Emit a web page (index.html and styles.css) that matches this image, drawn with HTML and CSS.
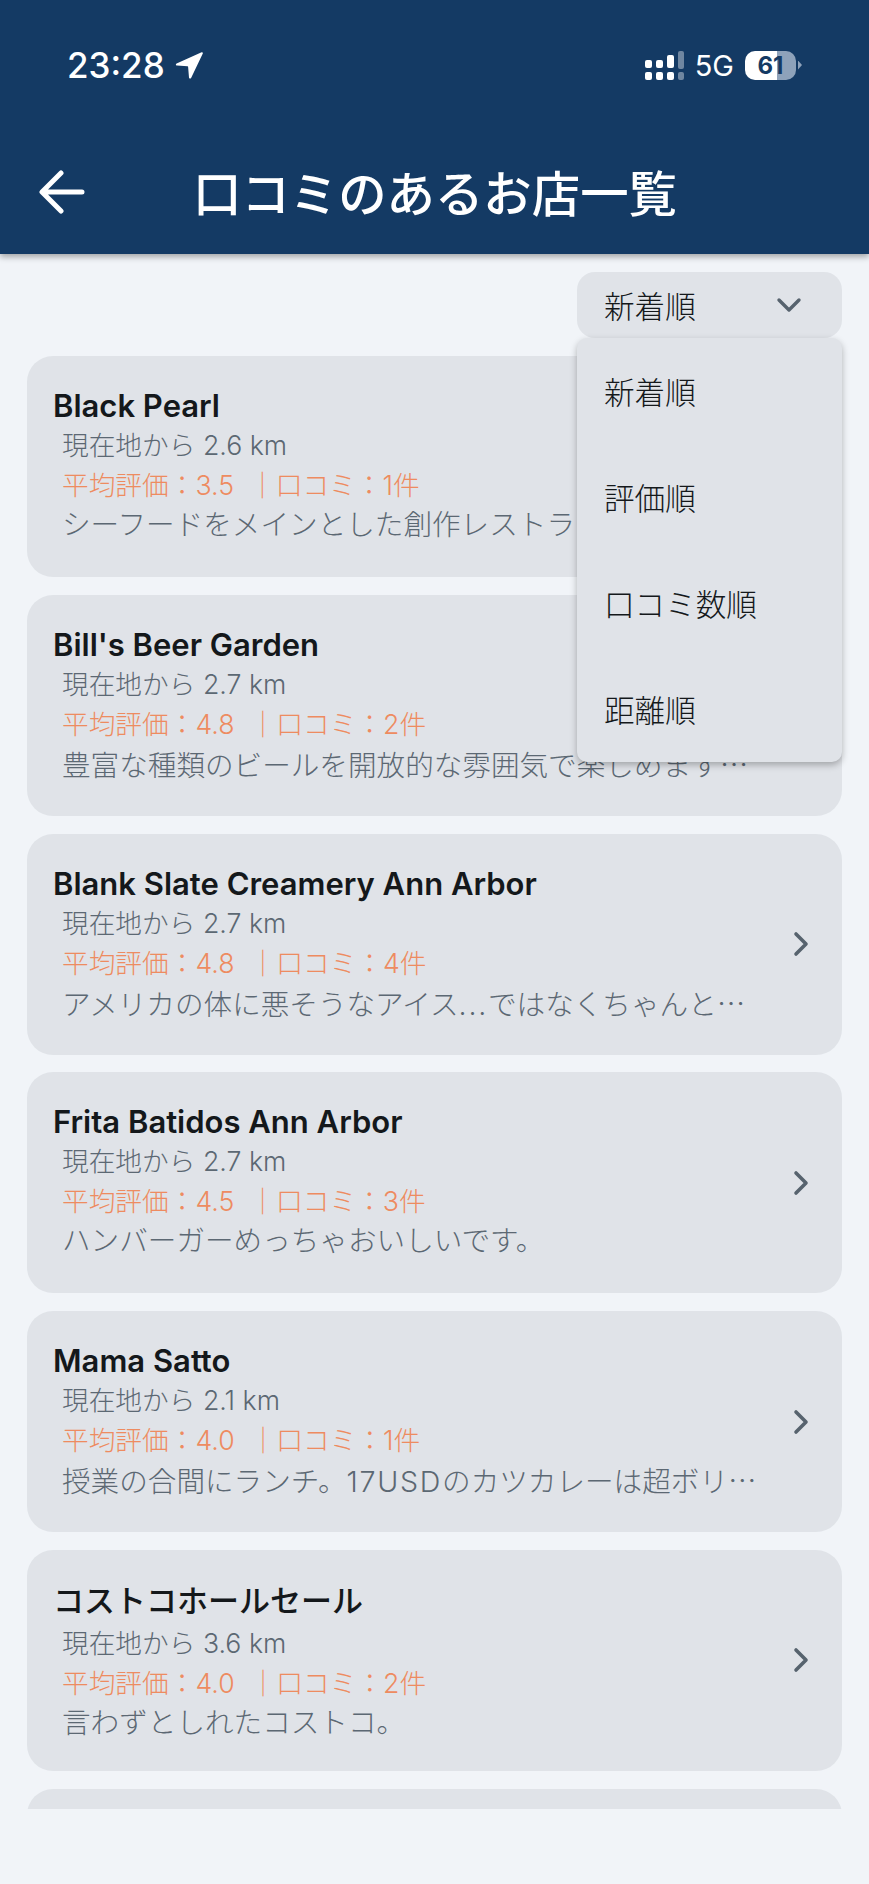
FILE: index.html
```html
<!DOCTYPE html>
<html lang="ja">
<head>
  <meta charset="UTF-8">
  <meta name="viewport" content="width=device-width, initial-scale=1.0">
  <title>口コミのあるお店一覧</title>
  <link rel="stylesheet" href="styles.css">
</head>
<body>
  <header class="app-bar">
    <div class="status-bar">
      <div class="status-left">
        <span class="clock">23:28</span>
        <svg class="location" width="28" height="28" viewBox="0 0 28 28"><path d="M26.6 1.2 1.6 12.4c-1.2.6-.9 2 .4 2.1l10.6.8c.3 0 .5.2.5.5l.9 10.7c.1 1.3 1.5 1.5 2.1.4L27.8 2.4c.3-.8-.4-1.5-1.2-1.2z" fill="#fff"/></svg>
      </div>
      <div class="status-right">
        <svg class="signal" width="40" height="29" viewBox="0 0 40 29">
          <g fill="#fff">
            <rect x="0" y="9" width="7" height="8" rx="2"/>
            <rect x="0" y="21" width="7" height="8" rx="2"/>
            <rect x="11" y="9" width="7" height="8" rx="2"/>
            <rect x="11" y="21" width="7" height="8" rx="2"/>
            <rect x="22" y="4" width="7" height="13" rx="2"/>
            <rect x="22" y="21" width="7" height="8" rx="2"/>
          </g>
          <g fill="#6f86a0">
            <rect x="33" y="0" width="6" height="18" rx="2"/>
            <rect x="33" y="21" width="6" height="8" rx="2"/>
          </g>
        </svg>
        <span class="network">5G</span>
        <span class="battery">61</span>
        <span class="battery-nub"></span>
      </div>
    </div>
    <div class="title-row">
      <svg class="back" width="46" height="44" viewBox="0 0 46 44"><path d="M43 22H4M22 3 3 22l19 19" fill="none" stroke="#fff" stroke-width="5" stroke-linecap="round" stroke-linejoin="round"/></svg>
      <h1>口コミのあるお店一覧</h1>
    </div>
  </header>

  <main class="content">
    <div class="sort">
      <div class="sort-button">
        <span>新着順</span>
        <svg width="26" height="16" viewBox="0 0 26 16"><path d="M3 3 13 13 23 3" fill="none" stroke="#57636e" stroke-width="3.4" stroke-linecap="round" stroke-linejoin="round"/></svg>
      </div>
      <ul class="sort-menu">
        <li>新着順</li>
        <li>評価順</li>
        <li>口コミ数順</li>
        <li>距離順</li>
      </ul>
    </div>

    <div class="list">
      <article class="card">
        <div class="card-body">
          <h2>Black Pearl</h2>
          <p class="distance">現在地から 2.6 km</p>
          <p class="rating">平均評価：3.5&nbsp; ｜口コミ：1件</p>
          <p class="desc">シーフードをメインとした創作レストラ</p>
        </div>
        <svg class="chevron" width="18" height="26" viewBox="0 0 18 26"><path d="M4 3 14 13 4 23" fill="none" stroke="#57636e" stroke-width="3.6" stroke-linecap="round" stroke-linejoin="round"/></svg>
      </article>
      <article class="card">
        <div class="card-body">
          <h2>Bill's Beer Garden</h2>
          <p class="distance">現在地から 2.7 km</p>
          <p class="rating">平均評価：4.8&nbsp; ｜口コミ：2件</p>
          <p class="desc">豊富な種類のビールを開放的な雰囲気で楽しめます<span class="more">…</span></p>
        </div>
        <svg class="chevron" width="18" height="26" viewBox="0 0 18 26"><path d="M4 3 14 13 4 23" fill="none" stroke="#57636e" stroke-width="3.6" stroke-linecap="round" stroke-linejoin="round"/></svg>
      </article>
      <article class="card">
        <div class="card-body">
          <h2>Blank Slate Creamery Ann Arbor</h2>
          <p class="distance">現在地から 2.7 km</p>
          <p class="rating">平均評価：4.8&nbsp; ｜口コミ：4件</p>
          <p class="desc">アメリカの体に悪そうなアイス<span class="latin">...</span>ではなくちゃんと<span class="more">…</span></p>
        </div>
        <svg class="chevron" width="18" height="26" viewBox="0 0 18 26"><path d="M4 3 14 13 4 23" fill="none" stroke="#57636e" stroke-width="3.6" stroke-linecap="round" stroke-linejoin="round"/></svg>
      </article>
      <article class="card">
        <div class="card-body">
          <h2>Frita Batidos Ann Arbor</h2>
          <p class="distance">現在地から 2.7 km</p>
          <p class="rating">平均評価：4.5&nbsp; ｜口コミ：3件</p>
          <p class="desc">ハンバーガーめっちゃおいしいです。</p>
        </div>
        <svg class="chevron" width="18" height="26" viewBox="0 0 18 26"><path d="M4 3 14 13 4 23" fill="none" stroke="#57636e" stroke-width="3.6" stroke-linecap="round" stroke-linejoin="round"/></svg>
      </article>
      <article class="card">
        <div class="card-body">
          <h2>Mama Satto</h2>
          <p class="distance">現在地から 2.1 km</p>
          <p class="rating">平均評価：4.0&nbsp; ｜口コミ：1件</p>
          <p class="desc">授業の合間にランチ。<span class="latin">17USD</span>のカツカレーは超ボリ<span class="more">…</span></p>
        </div>
        <svg class="chevron" width="18" height="26" viewBox="0 0 18 26"><path d="M4 3 14 13 4 23" fill="none" stroke="#57636e" stroke-width="3.6" stroke-linecap="round" stroke-linejoin="round"/></svg>
      </article>
      <article class="card">
        <div class="card-body">
          <h2 class="jp">コストコホールセール</h2>
          <p class="distance">現在地から 3.6 km</p>
          <p class="rating">平均評価：4.0&nbsp; ｜口コミ：2件</p>
          <p class="desc">言わずとしれたコストコ。</p>
        </div>
        <svg class="chevron" width="18" height="26" viewBox="0 0 18 26"><path d="M4 3 14 13 4 23" fill="none" stroke="#57636e" stroke-width="3.6" stroke-linecap="round" stroke-linejoin="round"/></svg>
      </article>
      <article class="card"></article>
    </div>
  </main>
</body>
</html>
```

FILE: styles.css
```css
* { box-sizing: border-box; }
html, body { margin: 0; padding: 0; }
body {
  height: 1884px;
  overflow: hidden;
  background: #f1f4f8;
  font-family: Inter, "Noto Sans CJK JP", sans-serif;
}

.app-bar {
  position: relative;
  z-index: 2;
  height: 254px;
  background: #143a64;
  box-shadow: 0 3px 6px rgba(0, 0, 0, 0.32);
  color: #fff;
}
.status-bar {
  height: 130px;
  padding: 44px 67px 0 67px;
  display: flex;
  justify-content: space-between;
  align-items: flex-start;
}
.status-left { display: flex; align-items: center; gap: 10px; }
.clock { font-size: 35px; font-weight: 500; line-height: 42px; }
.status-right { display: flex; align-items: center; padding-top: 5px; }
.signal { margin-right: 10px; }
.network { font-size: 29px; font-weight: 400; line-height: 30px; margin-right: 11px; padding-top: 2px; }
.battery {
  width: 51px;
  height: 29px;
  border-radius: 10px;
  background: linear-gradient(90deg, #fff 63%, #8ea2ba 63%);
  color: #143a64;
  font-size: 24px;
  font-weight: 700;
  line-height: 29px;
  text-align: center;
}
.battery-nub {
  width: 4px;
  height: 9px;
  margin-left: 2px;
  background: #8ea2ba;
  clip-path: polygon(0 0, 100% 50%, 0 100%);
}
.title-row {
  display: flex;
  align-items: center;
  height: 124px;
  padding: 0 0 0 39px;
}
.title-row h1 {
  margin: 0 0 0 108px;
  padding-top: 6px;
  font-size: 48.4px;
  font-weight: 500;
  line-height: 60px;
}
.back { flex: none; }

.content { padding: 18px 27px 0; }

.sort {
  position: relative;
  z-index: 1;
  display: flex;
  justify-content: flex-end;
}
.sort-button {
  width: 265px;
  height: 66px;
  padding: 0 40px 0 27px;
  display: flex;
  align-items: center;
  justify-content: space-between;
  border-radius: 18px;
  background: #e0e3e8;
  font-size: 30.6px;
  font-weight: 300;
  color: #14181b;
}
.sort-menu {
  position: absolute;
  top: 66px;
  right: 0;
  width: 265px;
  margin: 0;
  padding: 0;
  list-style: none;
  border-radius: 10px;
  background: #e0e3e8;
  box-shadow: 0 3px 7px rgba(0, 0, 0, 0.28);
}
.sort-menu li {
  height: 106px;
  padding-left: 27px;
  display: flex;
  align-items: center;
  font-size: 30.6px;
  font-weight: 300;
  color: #14181b;
}

.list {
  height: 1453px;
  margin-top: 18px;
  overflow: hidden;
  display: flex;
  flex-direction: column;
  gap: 17.8px;
}
.card {
  flex: none;
  height: 221px;
  padding: 0 26px;
  display: flex;
  align-items: center;
  justify-content: space-between;
  border-radius: 26px;
  background: #e0e3e8;
}
.card-body { width: 700px; align-self: flex-start; padding-top: 31px; }
.card h2 {
  margin: 0;
  font-size: 31px;
  font-weight: 600;
  line-height: 38px;
  color: #14181b;
}
.card h2.jp { font-weight: 500; line-height: 44px; margin-top: -2px; }
.card p {
  margin: 0 0 0 9px;
  font-size: 26.7px;
  font-weight: 300;
  line-height: 40px;
  white-space: nowrap;
}
.distance { color: #5c6873; }
.rating { color: #ee8b60; }
.card p.desc { font-size: 28.6px; color: #5c6873; }
.latin { letter-spacing: 0.06em; }
.more { font-family: "Noto Sans CJK JP", sans-serif; }
.chevron { flex: none; margin-right: 6px; }
```
